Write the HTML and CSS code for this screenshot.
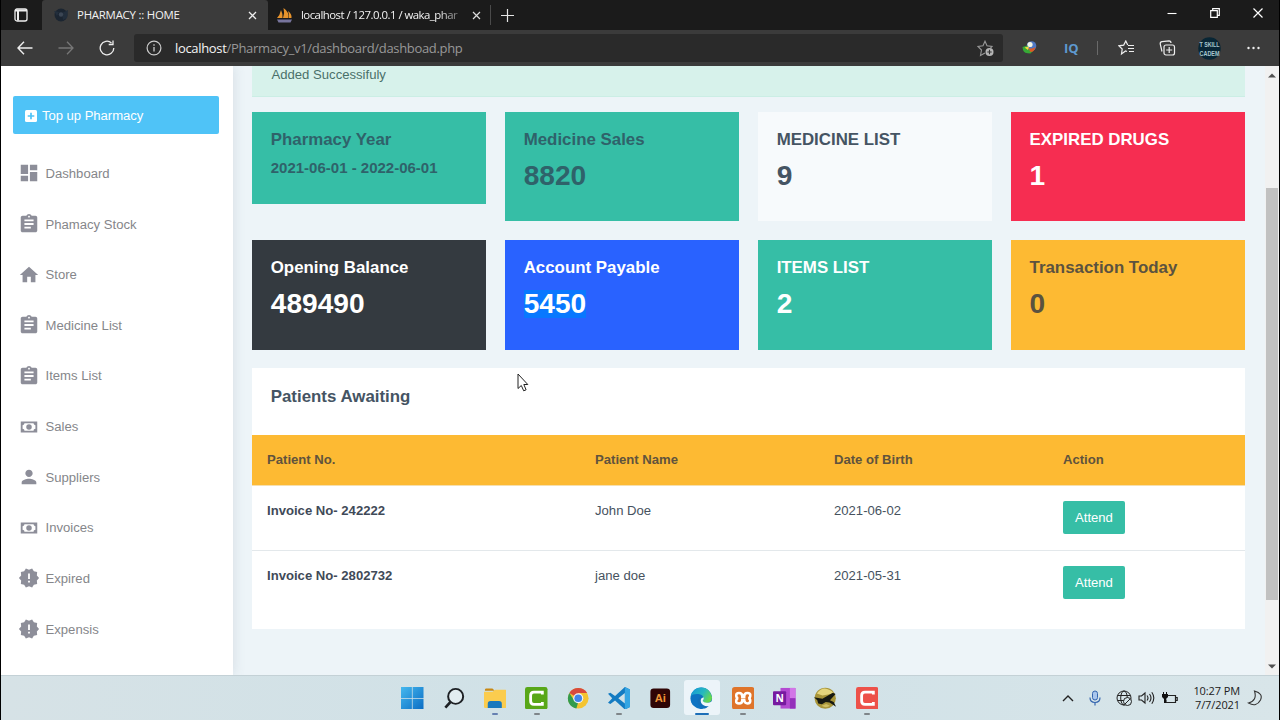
FILE: index.html
```html
<!DOCTYPE html>
<html lang="en">
<head>
<meta charset="utf-8">
<title>PHARMACY :: HOME</title>
<link rel="stylesheet" href="styles.css">
</head>
<body>
<svg class="sprite" aria-hidden="true">
  <symbol id="dashboard" viewBox="0 0 24 24"><path d="M3 13h8V3H3v10zm0 8h8v-6H3v6zm10 0h8V11h-8v10zm0-18v6h8V3h-8z"/></symbol>
  <symbol id="assignment" viewBox="0 0 24 24"><path d="M19 3h-4.18C14.4 1.84 13.3 1 12 1c-1.3 0-2.4.84-2.82 2H5c-1.1 0-2 .9-2 2v14c0 1.1.9 2 2 2h14c1.1 0 2-.9 2-2V5c0-1.100-.9-2-2-2zm-7 0c.55 0 1 .45 1 1s-.45 1-1 1-1-.45-1-1 .45-1 1-1zm2 14H7v-2h7v2zm3-4H7v-2h10v2zm0-4H7V7h10v2z"/></symbol>
  <symbol id="home" viewBox="0 0 24 24"><path d="M10 20v-6h4v6h5v-8h3L12 3 2 12h3v8z"/></symbol>
  <symbol id="cash" viewBox="0 0 24 24"><path fill-rule="evenodd" d="M3 6h18v12H3zM7 8c0 1.100-.9 2-2 2v4c1.100 0 2 .9 2 2h10c0-1.100.9-2 2-2v-4c-1.100 0-2-.9-2-2z"/><circle cx="12" cy="12" r="3"/></symbol>
  <symbol id="person" viewBox="0 0 24 24"><path d="M12 12c2.210 0 4-1.790 4-4s-1.790-4-4-4-4 1.790-4 4 1.790 4 4 4zm0 2c-2.670 0-8 1.340-8 4v2h16v-2c0-2.660-5.330-4-8-4z"/></symbol>
  <symbol id="release" viewBox="0 0 24 24"><path d="M23 12l-2.440-2.780.34-3.680-3.610-.82-1.890-3.180L12 3 8.600 1.540 6.710 4.720l-3.610.81.34 3.680L1 12l2.440 2.780-.34 3.690 3.610.82 1.890 3.180L12 21l3.400 1.460 1.890-3.180 3.610-.82-.34-3.680L23 12zm-10 5h-2v-2h2v2zm0-4h-2V7h2v6z"/></symbol>
</svg>

<div class="screen">
  <header class="tabs">
    <div class="tab-menu"><svg width="14" height="14" viewBox="0 0 14 14"><rect x="1" y="1" width="12" height="12" rx="2" fill="none" stroke="#eee" stroke-width="1.300"/><path d="M1 2.500h12M4 3v9.500" stroke="#eee" stroke-width="2"/></svg></div>
    <div class="tab tab-active">
      <svg width="16" height="16" viewBox="0 0 16 16"><circle cx="8" cy="8" r="6.500" fill="#1b2531"/><path d="M1 4l5 1-2 4zM9 6l6-3-1 8-4 2z" fill="#222e3c"/><circle cx="8" cy="7.500" r="2.200" fill="#3b4654"/></svg>
      <span class="tab-title">PHARMACY :: HOME</span>
      <svg class="tab-close" width="9" height="9" viewBox="0 0 9 9"><path d="M1 1l7 7M8 1L1 8" stroke="#eee" stroke-width="1.300"/></svg>
    </div>
    <div class="tab tab-second">
      <svg width="17" height="16" viewBox="0 0 17 16"><path d="M1 11Q4 8 5 3q2 4 1.500 8zM7 11Q9 6 7.500 1q6 4 4.500 10zM12.500 11q1-4-.5-7 4 3 3.500 7z" fill="#e8942c"/><path d="M1 12.500h15l-1.500 3h-12z" fill="#77749c"/></svg>
      <span class="tab-title tab-fade">localhost / 127.0.0.1 / waka_phar</span>
      <svg class="tab-close" width="9" height="9" viewBox="0 0 9 9"><path d="M1 1l7 7M8 1L1 8" stroke="#ddd" stroke-width="1.200"/></svg>
    </div>
    <div class="new-tab"><svg width="13" height="13" viewBox="0 0 13 13"><path d="M6.500 0v13M0 6.500h13" stroke="#e5e5e5" stroke-width="1.200"/></svg></div>
    <div class="window-buttons">
      <svg width="10" height="10" viewBox="0 0 10 10"><path d="M.5 5.500h9" stroke="#fff" stroke-width="1.100"/></svg>
      <svg width="10" height="10" viewBox="0 0 10 10"><path d="M.7 2.700h6.600v6.600H.7zM2.700 2.500V.7h6.600v6.600H7.500" fill="none" stroke="#fff" stroke-width="1.200"/></svg>
      <svg width="10" height="10" viewBox="0 0 10 10"><path d="M.5.5l9 9M9.500.5l-9 9" stroke="#fff" stroke-width="1.200"/></svg>
    </div>
  </header>

  <div class="toolbar">
    <div class="nav-buttons">
      <svg width="16" height="14" viewBox="0 0 16 14"><path d="M7 .8L1 7l6 6.200M1 7h14.500" fill="none" stroke="#eee" stroke-width="1.400"/></svg>
      <svg width="16" height="14" viewBox="0 0 16 14"><path d="M9 .8L15 7l-6 6.200M15 7H.5" fill="none" stroke="#777" stroke-width="1.300"/></svg>
      <svg width="16" height="16" viewBox="0 0 16 16"><path d="M14.800 8A6.800 6.800 0 1 1 12.500 2.900M14 .5v4H9.700" fill="none" stroke="#eee" stroke-width="1.300"/></svg>
    </div>
    <div class="address">
      <svg width="16" height="16" viewBox="0 0 16 16"><circle cx="8" cy="8" r="6.900" fill="none" stroke="#ccc" stroke-width="1.200"/><path d="M8 7v4.500M8 4.200v1.500" stroke="#ccc" stroke-width="1.300"/></svg>
      <span class="url"><b>localhost</b>/Pharmacy_v1/dashboard/dashboad.php</span>
      <svg class="address-star" width="18" height="17" viewBox="0 0 18 17"><path d="M8 13l-4.500 2.500L4.500 10 1 6.500l5-.7L8 1.200l2 4.600 5 .7-1.500 1.500" fill="none" stroke="#999" stroke-width="1.100"/><circle cx="12.500" cy="12" r="4" fill="#b5b5b5"/><path d="M12.500 9.800v4.400M10.300 12h4.400" stroke="#333" stroke-width="1.100"/></svg>
    </div>
    <div class="extensions">
      <svg class="ext-idm" width="18" height="16" viewBox="0 0 18 16"><circle cx="10.500" cy="6" r="4.800" fill="#4f78c4"/><circle cx="9" cy="4.500" r="2.600" fill="#f3f4e3"/><path d="M1.500 7l5-1.500-.5 3 6 2.500-2.500 2.500Q3 13.500 2 10z" fill="#37a936"/><path d="M7 8q4 1.500 7.500-1-1 5-5 5z" fill="#dc5a24"/><path d="M3.500 7.500l4.500-1-1 3.500z" fill="#f4d83b"/></svg>
      <span class="ext-iq">IQ</span>
      <i class="divider"></i>
      <svg class="ext-fav" width="17" height="16" viewBox="0 0 17 16"><path d="M9 11.500L7.500 11 3.500 14l.7-5L1 5.800l4.700-.7L7.800 1l1.900 4" fill="none" stroke="#eee" stroke-width="1.200"/><path d="M10 5.500h6M10 8.500h6M11 11.500h5" stroke="#eee" stroke-width="1.200"/></svg>
      <svg class="ext-coll" width="17" height="16" viewBox="0 0 17 16"><rect x="5" y="5" width="10.500" height="10" rx="2" fill="none" stroke="#eee" stroke-width="1.200"/><path d="M10.200 7v6M7.200 10h6M3 11.500L1.200 4Q1 2 3 1.700L10 .8q2 0 2 2.200" fill="none" stroke="#eee" stroke-width="1.200"/></svg>
      <svg class="ext-avatar" width="23" height="23" viewBox="0 0 23 23"><circle cx="11.500" cy="11.500" r="11.200" fill="#082635"/><text x="1.500" y="10" textLength="20" lengthAdjust="spacingAndGlyphs" class="avatar-text">T SKILL</text><text x="1.500" y="18.500" textLength="20" lengthAdjust="spacingAndGlyphs" class="avatar-text">CADEM</text></svg>
      <svg class="ext-more" width="13" height="4" viewBox="0 0 13 4"><g fill="#eee"><circle cx="1.500" cy="2" r="1.200"/><circle cx="6.500" cy="2" r="1.200"/><circle cx="11.500" cy="2" r="1.200"/></g></svg>
    </div>
  </div>

  <div class="page">
    <aside class="sidebar">
      <a class="topup"><svg width="12" height="12" viewBox="0 0 12 12"><rect width="12" height="12" rx="1.500" fill="#fff"/><path d="M6 2.700v6.600M2.700 6h6.600" stroke="#4fc3f7" stroke-width="1.700"/></svg>Top up Pharmacy</a>
      <nav class="menu">
        <a><svg><use href="#dashboard"/></svg>Dashboard</a>
        <a><svg><use href="#assignment"/></svg>Phamacy Stock</a>
        <a><svg><use href="#home"/></svg>Store</a>
        <a><svg><use href="#assignment"/></svg>Medicine List</a>
        <a><svg><use href="#assignment"/></svg>Items List</a>
        <a><svg><use href="#cash"/></svg>Sales</a>
        <a><svg><use href="#person"/></svg>Suppliers</a>
        <a><svg><use href="#cash"/></svg>Invoices</a>
        <a><svg><use href="#release"/></svg>Expired</a>
        <a><svg><use href="#release"/></svg>Expensis</a>
      </nav>
    </aside>
    <main class="content">
      <div class="alert">Added Successifuly</div>
      <section class="cards">
        <div class="card green short"><h4>Pharmacy Year</h4><h5>2021-06-01 - 2022-06-01</h5></div>
        <div class="card green"><h4>Medicine Sales</h4><h2>8820</h2></div>
        <div class="card light"><h4>MEDICINE LIST</h4><h2>9</h2></div>
        <div class="card red inverse"><h4>EXPIRED DRUGS</h4><h2>1</h2></div>
        <div class="card dark inverse"><h4>Opening Balance</h4><h2>489490</h2></div>
        <div class="card blue inverse"><h4>Account Payable</h4><h2><span class="selected">5450</span></h2></div>
        <div class="card green inverse"><h4>ITEMS LIST</h4><h2>2</h2></div>
        <div class="card orange"><h4>Transaction Today</h4><h2>0</h2></div>
      </section>
      <section class="panel">
        <h4>Patients Awaiting</h4>
        <div class="row head"><span>Patient No.</span><span>Patient Name</span><span>Date of Birth</span><span>Action</span></div>
        <div class="row"><b>Invoice No- 242222</b><span>John Doe</span><span>2021-06-02</span><span><a class="attend">Attend</a></span></div>
        <div class="row"><b>Invoice No- 2802732</b><span>jane doe</span><span>2021-05-31</span><span><a class="attend">Attend</a></span></div>
      </section>
    </main>
    <div class="scrollbar">
      <svg width="8" height="5" viewBox="0 0 8 5"><path d="M0 4.500L4 .5l4 4z" fill="#505050"/></svg>
      <div class="track"><div class="thumb"></div></div>
      <svg width="8" height="5" viewBox="0 0 8 5"><path d="M0 .5l4 4 4-4z" fill="#505050"/></svg>
    </div>
  </div>

  <footer class="taskbar">
    <div class="apps">
      <div class="app"><svg viewBox="0 0 24 24"><defs><linearGradient id="win" x2="1" y2="1"><stop stop-color="#45b8ee"/><stop offset="1" stop-color="#0a6cc4"/></linearGradient></defs><path d="M0 0h11.600v11.600H0zM12.400 0H24v11.600H12.400zM0 12.400h11.600V24H0zM12.400 12.400H24V24H12.400z" fill="url(#win)"/></svg></div>
      <div class="app"><svg viewBox="0 0 24 24"><circle cx="13.500" cy="10" r="8" fill="#e2edf1" stroke="#1d2024" stroke-width="2.100"/><path d="M8 16l-5.500 6" stroke="#1d2024" stroke-width="2.800"/></svg></div>
      <div class="app run focus-mark"><svg viewBox="0 0 24 24"><path d="M1 3q0-1.500 1.500-1.500H9L11.500 4H1z" fill="#c98813"/><path d="M0 5h9l3-2h11q1 0 1 1.500V21q0 1.500-1.500 1.500h-21Q0 22.500 0 21z" fill="#fbcc4e"/><path d="M4 22.500V18q0-3 3-3h9q3 0 3 3v4.500z" fill="#1978bd"/></svg></div>
      <div class="app run"><svg viewBox="0 0 24 24"><rect width="24" height="24" rx="2.500" fill="#58a718"/><path d="M18.500 8V5.500H9.500q-3.500 0-3.500 3.500v6q0 3.500 3.500 3.500h9V16" fill="none" stroke="#fff" stroke-width="3"/></svg></div>
      <div class="app"><svg viewBox="0 0 24 24"><circle cx="12" cy="12" r="11" fill="#f4c431"/><path d="M12 12L2.500 6.500A11 11 0 0 1 21.500 6.500H12z" fill="#d84a3c"/><path d="M2.500 6.500L8 15l4 1-2 7A11 11 0 0 1 2.500 6.500z" fill="#339b4d"/><circle cx="12" cy="12" r="5.300" fill="#f3f6fb"/><circle cx="12" cy="12" r="4.100" fill="#4285e8"/></svg></div>
      <div class="app run"><svg viewBox="0 0 24 24"><path d="M18 0l6 2.800v18.400L18 24 7.500 14.300 2.500 18 0 16.700 4.500 12 0 7.300 2.500 6l5 3.700zM18 6.500L11 12l7 5.500z" fill="#137bc2" fill-rule="evenodd"/><path d="M18 0l6 2.800v18.400L18 24z" fill="#34a5e3"/></svg></div>
      <div class="app"><svg viewBox="0 0 24 24"><rect x="1.500" y="1.500" width="21" height="21" rx="3.500" fill="#2f0505"/><text x="12" y="16.500" text-anchor="middle" class="ai-text">Ai</text></svg></div>
      <div class="app run active"><svg viewBox="0 0 24 24"><defs><linearGradient id="edge" x2="1" y2=".5"><stop stop-color="#1395da"/><stop offset=".6" stop-color="#27b8bf"/><stop offset="1" stop-color="#65d851"/></linearGradient></defs><circle cx="12" cy="12" r="11.500" fill="#0d73c2"/><path d="M.7 10Q3 .5 12 .5T23.500 11q0 6-6 6-4.500 0-4.500-2 2-1 1.500-3Q14 8 9 7.500 3 7 .7 10z" fill="url(#edge)"/><path d="M23 15.500q-2 2-5.500 2-6 0-5-4 .3-2-1-3Q8 12 8 16q1 5 8 6.800 5-2 7-7.300z" fill="#126fb9"/><path d="M14.500 11q1 2.500-1 4 2 3 8 1.200l2-1 .5 1-3 4q-4 1-7-1-3-2-2.500-5.500 0-2 3-2.700z" fill="#f0f7fb"/></svg></div>
      <div class="app run"><svg viewBox="0 0 24 24"><rect width="24" height="24" rx="3" fill="#df742a"/><path d="M7.500 6.500Q11 6.500 11 10v.5h2V10q0-3.500 3.500-3.500T19.500 9q0 2.500-2 3 2 .5 2 3t-3 2.500T13 14v-.5h-2v.5q0 3.500-3.500 3.500T4.500 15q0-2.500 2-3-2-.5-2-3t3-2.500z" fill="none" stroke="#fff" stroke-width="2.700"/></svg></div>
      <div class="app"><svg viewBox="0 0 24 24"><path d="M8 1h16v22H8z" fill="#b34ad2"/><path d="M18 1h6v11h-6z" fill="#d276e7"/><path d="M18 12h6v11h-6z" fill="#9430bb"/><rect y="4.500" width="14" height="15" rx="1" fill="#7719a0"/><text x="7" y="16" text-anchor="middle" class="note-text">N</text></svg></div>
      <div class="app"><svg viewBox="0 0 24 24"><circle cx="12" cy="12" r="11.300" fill="#a8953a"/><path d="M3 7Q8 0 14 2t7 5L9 9z" fill="#e6d67c"/><path d="M0 11l9 1.500L20 6l3 1.500-6 6.500 4 2 2.500 5-7-4.500-4-.5-4 2.500-4-1-1-3.500z" fill="#171911"/><path d="M8 20q5 3 9 0l-4-2z" fill="#d2bf62"/></svg></div>
      <div class="app run"><svg viewBox="0 0 24 24"><rect width="24" height="24" rx="2.500" fill="#ed5149"/><path d="M18.500 8V5.500H9.500q-3.500 0-3.500 3.500v6q0 3.500 3.500 3.500h9V16" fill="none" stroke="#fff" stroke-width="3"/></svg></div>
    </div>
    <div class="tray">
      <svg width="12" height="8" viewBox="0 0 12 8"><path d="M1 7l5-5 5 5" fill="none" stroke="#222" stroke-width="1.400"/></svg>
      <svg class="mic" width="12" height="16" viewBox="0 0 12 16"><rect x="3.500" y="1" width="5" height="9" rx="2.500" fill="#a9c6ed" stroke="#3465af"/><path d="M1 7.500q0 5 5 5t5-5M6 12.500v3" fill="none" stroke="#3465af" stroke-width="1.200"/></svg>
      <svg class="globe" width="16" height="16" viewBox="0 0 16 16"><g fill="none" stroke="#222" stroke-width="1"><circle cx="8" cy="8" r="7"/><ellipse cx="8" cy="8" rx="3.300" ry="7"/><path d="M1.500 5.500h13M1.500 10.500h7"/></g><circle cx="11.500" cy="11.500" r="4" fill="#d5e4e9" stroke="#222"/><path d="M9 14l5-5" stroke="#222"/></svg>
      <svg class="speaker" width="17" height="14" viewBox="0 0 17 14"><path d="M1 5h2.500L7 2v10L3.500 9H1zM9 4.500q2 2.500 0 5M11.500 3q3 4 0 8M13.800 1.300q4 5.700 0 11.400" fill="none" stroke="#222" stroke-width="1.100"/></svg>
      <svg class="battery" width="16" height="13" viewBox="0 0 16 13"><path d="M6 3.500h7.500v7H4v-3M14 5.500h1.200v3H14" fill="none" stroke="#222" stroke-width="1.200"/><path d="M0 2h6v3L4 7v4H2V7L0 5zM1 0h1v2H1zM4 0h1v2H4z" fill="#111"/></svg>
      <div class="clock"><span>10:27 PM</span><span>7/7/2021</span></div>
      <svg class="moon" width="15" height="16" viewBox="0 0 15 16"><path d="M7.500 1q9 2.500 6 9-4 7.500-12 3 9-2.500 6-12z" fill="none" stroke="#333" stroke-width="1.100"/></svg>
    </div>
  </footer>
  <svg class="cursor" width="12" height="19" viewBox="0 0 12 19"><path d="M1 1v14.500l3.300-3 2.400 5.300 2.400-1-2.300-5.300h4z" fill="#fff" stroke="#222" stroke-width="1"/></svg>
</div>
</body>
</html>
```
FILE: styles.css
```css
* { box-sizing: border-box; }
body { margin: 0; background: #000; font: 13.125px/20px "Liberation Sans", Arial, sans-serif; color: #46525e; }
h2, h4, h5 { margin: 0; }
svg { flex: none; display: block; }
.sprite { position: absolute; width: 0; height: 0; }
.screen { position: relative; width: 1280px; height: 720px; padding: 0 1px; display: flex; flex-direction: column; overflow: hidden; }

.tabs { height: 30px; background: #1b1b1b; display: flex; align-items: center; color: #f2f2f2; font: 11.4px/30px "Open Sans", "Noto Sans", sans-serif; }
.tab-menu { width: 41px; padding-left: 13px; }
.tab { height: 30px; display: flex; align-items: center; gap: 8px; }
.tab-active { width: 226px; background: #3b3b3b; padding: 0 11px 0 11px; border-radius: 3px 3px 0 0; }
.tab-active .tab-title { letter-spacing: -.22px; }
.tab-second { width: 223px; padding: 0 9px 0 8px; border-right: 1px solid #4a4a4a; height: 20px; }
.tab-title { white-space: nowrap; }
.tab-fade { width: 163px; letter-spacing: -.52px; mask-image: linear-gradient(90deg, #000 84%, rgba(0, 0, 0, .2)); }
.tab-close { margin-left: auto; }
.new-tab { padding-left: 10px; }
.window-buttons { margin-left: auto; display: flex; gap: 33px; padding: 0 16px 4px 0; }

.toolbar { height: 36px; background: #3b3b3b; display: flex; align-items: center; }
.nav-buttons { width: 133px; display: flex; gap: 25px; padding-left: 16px; align-items: center; }
.address { width: 869px; height: 28px; background: #2a2a2a; border-radius: 3px; display: flex; align-items: center; padding: 0 8px 0 12px; gap: 13px; }
.url { color: #989898; font: 13px/26px "Open Sans", "Noto Sans", sans-serif; letter-spacing: -.33px; }
.url b { color: #f4f4f4; font-weight: 400; }
.address-star { margin-left: auto; }
.extensions { flex: 1; display: flex; align-items: center; padding-left: 18px; }
.ext-iq { margin-left: 25px; width: 16px; color: #5e99cf; font: bold 13px/20px "Open Sans", sans-serif; }
.divider { width: 1px; height: 14px; margin-left: 17px; background: #6a6a6a; }
.ext-fav { margin-left: 20px; }
.ext-coll { margin-left: 24px; }
.ext-avatar { margin-left: 22px; }
.avatar-text { font: bold 7.5px "Liberation Sans", sans-serif; fill: #a8c8cd; }
.ext-more { margin-left: 26px; }

.page { height: 609px; display: flex; background: #edf4f8; overflow: hidden; }
.sidebar { width: 232px; background: #fff; padding: 30px 14px 0 12px; box-shadow: 0 0 12px rgba(80, 100, 120, .16); }
.topup { height: 38px; background: #4fc3f7; border-radius: 2px; color: #fff; display: flex; align-items: center; gap: 5px; padding: 1px 0 0 12px; letter-spacing: -.05px; }
.menu { padding: 14.600px 0 0 5px; }
.menu a { height: 50.625px; display: flex; align-items: center; gap: 5.500px; color: #85868a; }
.menu svg { width: 22px; height: 22px; margin-top: -1px; fill: #8d8e99; }
.content { flex: 1; padding: 0 20px 0 19px; }
.alert { height: 31px; background: #d7f2eb; color: #4a7069; border-bottom: 1px solid #cbeee5; padding: 0 19.500px; line-height: 17px; }
.cards { margin-top: 14.500px; display: grid; grid-template-columns: repeat(4, 1fr); gap: 19px 18.750px; align-items: start; }
.card { height: 109.500px; padding: 18px 18.750px; }
.card.short { height: 92px; }
.card h4, .panel h4 { font-size: 16.875px; line-height: 20px; }
.card h5 { font-size: 15px; line-height: 20px; margin-top: 8.500px; }
.card h2 { font-size: 28.125px; line-height: 34px; margin-top: 9px; }
.green { background: #36bea6; color: #2f626a; }
.light { background: #f7fafc; color: #455463; }
.red { background: #f62d51; }
.dark { background: #343a40; }
.blue { background: #2962ff; }
.orange { background: #fdba33; color: #5b523f; }
.inverse { color: #fff; }
.selected { background: #0878ff; }
.card h2 .selected { display: inline-block; line-height: 28px; }
.panel { margin-top: 18px; height: 261px; background: #fff; }
.panel h4 { height: 67px; padding: 19px 18.750px; color: #455463; }
.row { height: 65px; display: grid; grid-template-columns: 328px 239px 229px 1fr; padding: 15px 15px 0; border-top: 1px solid #e3e8eb; }
.row.head { height: 50px; background: #fdba33; border-top: 0; font-weight: bold; color: #60533d; }
.row.head + .row { border-top-color: #f6dfae; }
.row b { color: #3f4a58; }
.attend { display: inline-block; height: 33px; line-height: 33px; padding: 0 12px; background: #36bea6; color: #fff; border-radius: 2px; }
.scrollbar { width: 14px; background: #f1f1f1; display: flex; flex-direction: column; align-items: center; padding: 7px 0 6px; }
.track { flex: 1; width: 12px; padding-top: 110px; }
.thumb { height: 412px; background: #c1c1c1; }

.taskbar { height: 45px; background: linear-gradient(90deg, #d6e2e6, #cfe1e7 50%, #d8e5e9); border-top: 1px solid #c4d1d6; display: flex; justify-content: space-between; }
.apps { display: flex; padding-left: 391px; }
.app { width: 41.300px; position: relative; display: flex; justify-content: center; padding-top: 10.500px; }
.app > svg { width: 22.500px; height: 22.500px; z-index: 1; }
.app.run::after { content: ""; position: absolute; bottom: 5px; width: 6px; height: 2.500px; border-radius: 2px; background: #7f8589; }
.app.focus-mark::after { background: #6680b1; }
.app.active::before { content: ""; position: absolute; top: 4px; width: 36px; height: 35px; border-radius: 3px; background: #ecf4f9; }
.app.active::after { width: 14px; background: #1c6eb8; }
.ai-text { font: bold 12px "Liberation Sans", sans-serif; fill: #ee9638; }
.note-text { font: bold 11px "Open Sans", sans-serif; fill: #fff; }
.tray { display: flex; align-items: center; padding-right: 17px; }
.mic { margin-left: 15px; }
.globe { margin-left: 15px; }
.speaker { margin-left: 6px; }
.battery { margin-left: 7px; }
.clock { width: 62px; display: flex; flex-direction: column; align-items: flex-end; font: 11px/14.500px "Open Sans", "Noto Sans", sans-serif; letter-spacing: -.1px; color: #202020; }
.moon { margin-left: 7px; }
.cursor { position: absolute; left: 517px; top: 373px; }
```
